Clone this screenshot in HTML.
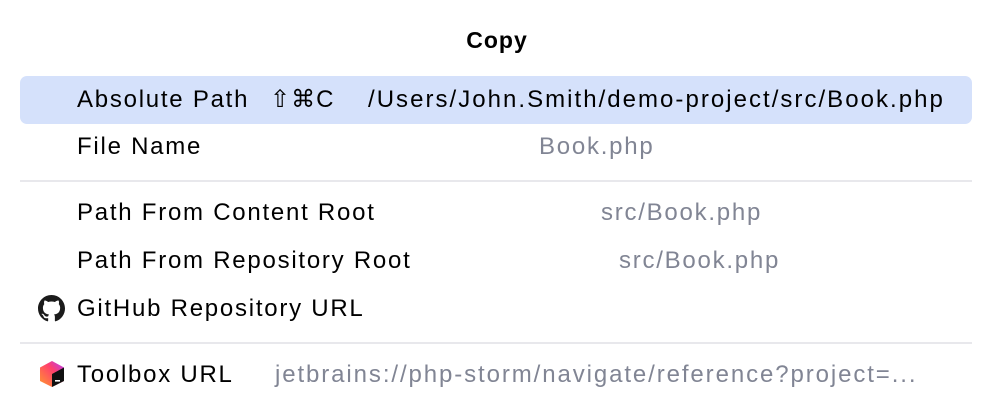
<!DOCTYPE html>
<html><head><meta charset="utf-8"><style>
body{margin:0;width:994px;height:414px;background:#fff;position:relative;overflow:hidden;font-family:"Liberation Sans",sans-serif;font-size:24px;letter-spacing:1.75px;color:#000}
.t{position:absolute;white-space:nowrap;line-height:26px}
.g{color:#818594}
.sep{position:absolute;left:20px;width:952px;height:2px;background:#e8e8ec}
</style></head><body>
<div class="t" style="left:0;width:994px;text-align:center;top:27px;font-weight:bold;font-size:23px;letter-spacing:1px">Copy</div>
<div style="position:absolute;left:20px;top:76px;width:952px;height:48px;background:#d5e1fb;border-radius:7px"></div>
<div class="t" style="left:77px;top:87px">Absolute Path</div>
<div class="t" style="left:270px;top:87px;letter-spacing:1px">⇧⌘C</div>
<div class="t" style="left:368px;top:87px;letter-spacing:2.03px">/Users/John.Smith/demo-project/src/Book.php</div>
<div class="t" style="left:77px;top:134px">File Name</div>
<div class="t g" style="left:539px;top:134px">Book.php</div>
<div class="sep" style="top:180px"></div>
<div class="t" style="left:77px;top:200px">Path From Content Root</div>
<div class="t g" style="left:601px;top:200px">src/Book.php</div>
<div class="t" style="left:77px;top:248px">Path From Repository Root</div>
<div class="t g" style="left:619px;top:248px">src/Book.php</div>
<svg style="position:absolute;left:38px;top:295px" width="27" height="27" viewBox="0 0 16 16"><path fill="#1b1b1b" d="M8 0C3.58 0 0 3.58 0 8c0 3.54 2.29 6.53 5.47 7.59.4.07.55-.17.55-.38 0-.19-.01-.82-.01-1.49-2.01.37-2.53-.49-2.69-.94-.09-.23-.48-.94-.82-1.13-.28-.15-.68-.52-.01-.53.63-.01 1.08.58 1.23.82.72 1.21 1.87.87 2.33.66.07-.52.28-.87.51-1.07-1.78-.2-3.64-.89-3.64-3.95 0-.87.31-1.59.82-2.15-.08-.2-.36-1.02.08-2.12 0 0 .67-.21 2.2.82.64-.18 1.32-.27 2-.27.68 0 1.36.09 2 .27 1.53-1.04 2.2-.82 2.2-.82.44 1.1.16 1.92.08 2.12.51.56.82 1.27.82 2.15 0 3.07-1.87 3.75-3.65 3.95.29.25.54.73.54 1.48 0 1.07-.01 1.93-.01 2.2 0 .21.15.46.55.38A8.013 8.013 0 0016 8c0-4.42-3.58-8-8-8z"/></svg>
<div class="t" style="left:77px;top:296px">GitHub Repository URL</div>
<div class="sep" style="top:342px"></div>
<svg style="position:absolute;left:39px;top:360px" width="26" height="28" viewBox="0 0 26 28"><defs><linearGradient id="a" x1="0" y1="1" x2="1" y2="0"><stop offset="0" stop-color="#ff9a2e"/><stop offset=".6" stop-color="#ff3f6c"/><stop offset="1" stop-color="#b13cff"/></linearGradient></defs><path d="M13 1 25 7.5V21L13 27 1 21V7.5Z" fill="url(#a)"/><path d="M13 14 25 7.5V21L13 27Z" fill="#111"/><rect x="16" y="20" width="5" height="1.6" fill="#fff"/></svg>
<div class="t" style="left:77px;top:362px">Toolbox URL</div>
<div class="t g" style="left:275px;top:362px;letter-spacing:1.9px">jetbrains://php-storm/navigate/reference?project=...</div>
</body></html>
